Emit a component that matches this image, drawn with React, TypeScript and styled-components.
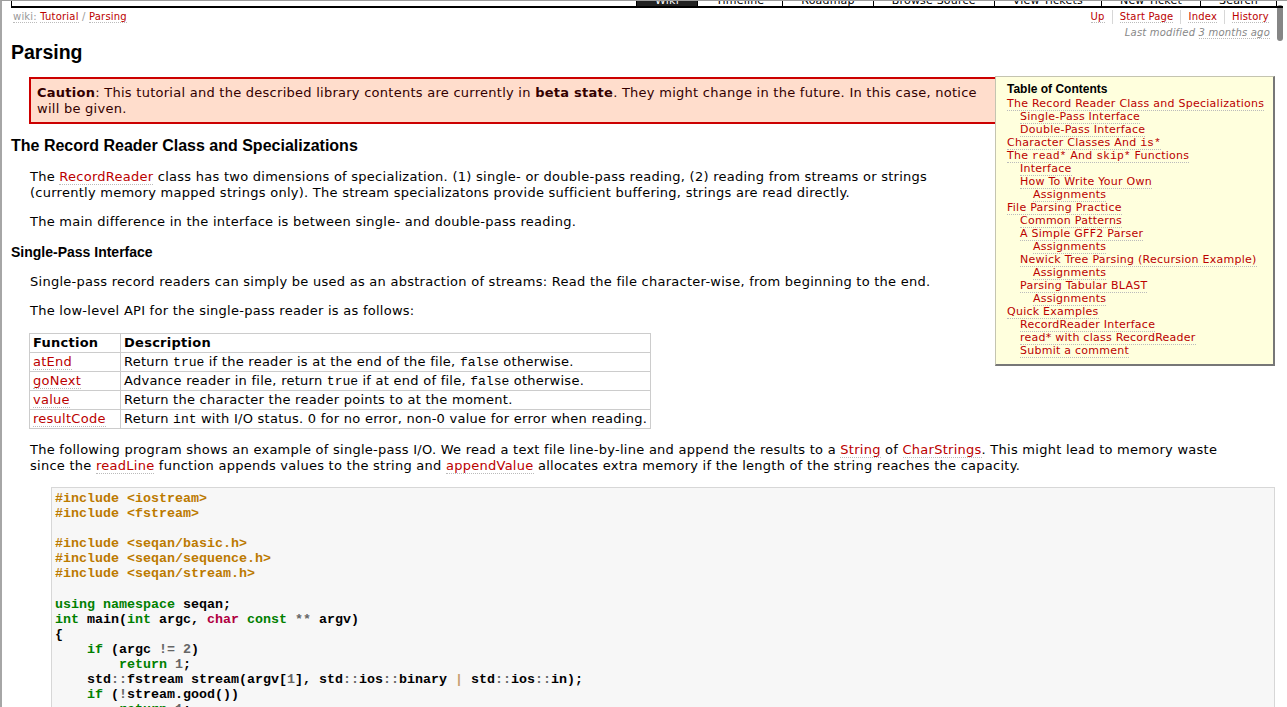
import React from "react";
import styled, { createGlobalStyle } from "styled-components";

const GlobalStyle = createGlobalStyle`
  html, body {
    margin: 0;
    padding: 0;
    background: #fff;
    overflow: hidden;
  }
  body {
    font-family: "DejaVu Sans", Verdana, sans-serif;
    font-size: 13px;
    letter-spacing: 0.26px;
    color: #000;
  }
`;

const Frame = styled.div`
  position: relative;
  height: 707px;
  box-sizing: border-box;
  border-top: 1px solid #9c9c9c;
  border-left: 2px solid #a6a6a6;
  overflow: hidden;
`;

const MainNav = styled.ul`
  display: flex;
  justify-content: flex-end;
  height: 5px;
  margin: 0 4px 0 9px;
  padding: 0 6px 0 0;
  list-style: none;
  border-left: 1px solid #000;
  border-bottom: 2px solid #000;
  overflow: hidden;
`;

const NavTab = styled.li<{ $active?: boolean }>`
  height: 5px;
  padding: 0 18px;
  border-left: 1px solid #000;
  background: ${(p) => (p.$active ? "#222" : "#fff")};
  color: ${(p) => (p.$active ? "#fff" : "#000")};
  font-size: 11px;
  letter-spacing: 0.2px;
  line-height: 13px;
  overflow: hidden;
  &:last-child {
    border-right: 1px solid #000;
  }
  span {
    display: block;
    margin-top: -7px;
    white-space: nowrap;
  }
`;

const ScrollThumb = styled.div`
  position: absolute;
  top: 4px;
  right: 4px;
  width: 6px;
  height: 36px;
  border-radius: 3px;
  background: rgba(0, 0, 0, 0.48);
`;

const Page = styled.div`
  padding: 0 12px 0 9px;
`;

const HeaderRow = styled.div`
  display: flex;
  justify-content: space-between;
  margin-top: 2px;
  font-size: 10px;
  letter-spacing: 0.2px;
  line-height: 14px;
`;

const Crumbs = styled.div`
  padding-left: 2px;
  color: #999;
`;

const Link = styled.a<{ $muted?: boolean }>`
  color: ${(p) => (p.$muted ? "#999" : "#b00")};
  text-decoration: none;
  border-bottom: 1px dotted #bbb;
  cursor: pointer;
`;

const CtxNav = styled.ul`
  display: flex;
  margin: 0;
  padding: 0 6px 0 0;
  list-style: none;
`;

const CtxItem = styled.li`
  padding: 0 7px;
  border-left: 1px solid #d7d7d7;
  &:first-child {
    border-left: none;
    padding-left: 0;
  }
  &:last-child {
    padding-right: 0;
  }
`;

const Modified = styled.div`
  margin-top: 2px;
  padding-right: 5px;
  text-align: right;
  font-size: 10px;
  letter-spacing: 0.2px;
  line-height: 14px;
  font-style: italic;
  color: #888;
  span {
    border-bottom: 1px dotted #bbb;
  }
`;

const Title = styled.h1`
  margin: 0;
  font-family: "Liberation Sans", Arial, sans-serif;
  font-size: 19.5px;
  line-height: 24px;
  font-weight: bold;
  letter-spacing: 0;
`;

const Wiki = styled.div`
  display: flow-root;
  padding-top: 12px;
`;

const Toc = styled.div`
  float: right;
  width: 280px;
  box-sizing: border-box;
  margin-left: 10px;
  padding: 6px 8px 7px 11px;
  background: #ffd;
  border: 1px solid #c4c4b0;
  border-right: 2px solid #777;
  border-bottom: 2px solid #777;
  font-size: 11px;
  line-height: 13px;
  letter-spacing: 0.25px;
`;

const TocTitle = styled.div`
  margin-bottom: 1px;
  font-family: "Liberation Sans", Arial, sans-serif;
  font-size: 12px;
  font-weight: bold;
  letter-spacing: 0;
`;

const TocItem = styled.div<{ $level: number }>`
  padding-left: ${(p) => p.$level * 13}px;
  white-space: nowrap;
`;

const Caution = styled.div`
  margin: 1px 0 0 18px;
  padding: 6px 6px 5px;
  background: #fdc;
  border: 2px solid #c00;
  color: #300;
  line-height: 16px;
`;

const H2 = styled.h2`
  margin: 12px 0 0;
  font-family: "Liberation Sans", Arial, sans-serif;
  font-size: 16px;
  line-height: 20px;
  letter-spacing: 0;
`;

const H3 = styled.h3`
  margin: 13px 0 0;
  font-family: "Liberation Sans", Arial, sans-serif;
  font-size: 14px;
  line-height: 18px;
  letter-spacing: 0;
`;

const P = styled.p`
  margin: 13px 20px 0 19px;
  line-height: 16px;
`;

const Tt = styled.code<{ $small?: boolean }>`
  font-family: "Liberation Mono", "Courier New", monospace;
  font-size: ${(p) => (p.$small ? "11.5px" : "13px")};
  line-height: 1;
  letter-spacing: 0;
`;

const Table = styled.table`
  margin: 14px 0 0 18px;
  border-collapse: collapse;
  border: 1px solid #ccc;
  line-height: 16px;
`;

const Th = styled.th<{ $w?: number }>`
  width: ${(p) => (p.$w ? `${p.$w}px` : "auto")};
  height: 16px;
  padding: 1px 3px;
  border: 1px solid #ccc;
  text-align: left;
  font-weight: bold;
`;

const Td = styled.td`
  height: 16px;
  padding: 1px 3px;
  border: 1px solid #ccc;
  white-space: nowrap;
`;

const Code = styled.pre`
  margin: 13px 0 0 40px;
  padding: 3px;
  background: #f7f7f7;
  border: 1px solid #d7d7d7;
  font-family: "Liberation Mono", "Courier New", monospace;
  font-size: 13.33px;
  font-weight: bold;
  line-height: 15.1px;
  letter-spacing: 0;
  color: #000;
`;

const Tok = styled.span<{ $k: string }>`
  color: ${(p) =>
    ({
      pp: "#bc7a00",
      kw: "#008000",
      ty: "#b00040",
      op: "#666",
      num: "#666",
      pipe: "#c8a070",
    } as Record<string, string>)[p.$k] || "#000"};
`;

const tabs = [
  "Wiki",
  "Timeline",
  "Roadmap",
  "Browse Source",
  "View Tickets",
  "New Ticket",
  "Search",
];

const toc: { level: number; label: React.ReactNode }[] = [
  { level: 0, label: "The Record Reader Class and Specializations" },
  { level: 1, label: "Single-Pass Interface" },
  { level: 1, label: "Double-Pass Interface" },
  {
    level: 0,
    label: (
      <>
        Character Classes And <Tt $small>is*</Tt>
      </>
    ),
  },
  {
    level: 0,
    label: (
      <>
        The <Tt $small>read*</Tt> And <Tt $small>skip*</Tt> Functions
      </>
    ),
  },
  { level: 1, label: "Interface" },
  { level: 1, label: "How To Write Your Own" },
  { level: 2, label: "Assignments" },
  { level: 0, label: "File Parsing Practice" },
  { level: 1, label: "Common Patterns" },
  { level: 1, label: "A Simple GFF2 Parser" },
  { level: 2, label: "Assignments" },
  { level: 1, label: "Newick Tree Parsing (Recursion Example)" },
  { level: 2, label: "Assignments" },
  { level: 1, label: "Parsing Tabular BLAST" },
  { level: 2, label: "Assignments" },
  { level: 0, label: "Quick Examples" },
  { level: 1, label: "RecordReader Interface" },
  { level: 1, label: "read* with class RecordReader" },
  { level: 1, label: "Submit a comment" },
];

type Line = [string, string][];

const code: Line[] = [
  [["pp", "#include <iostream>"]],
  [["pp", "#include <fstream>"]],
  [],
  [["pp", "#include <seqan/basic.h>"]],
  [["pp", "#include <seqan/sequence.h>"]],
  [["pp", "#include <seqan/stream.h>"]],
  [],
  [["kw", "using"], ["", " "], ["kw", "namespace"], ["", " seqan;"]],
  [
    ["kw", "int"],
    ["", " main("],
    ["kw", "int"],
    ["", " argc, "],
    ["ty", "char"],
    ["", " "],
    ["kw", "const"],
    ["", " "],
    ["op", "**"],
    ["", " argv)"],
  ],
  [["", "{"]],
  [["", "    "], ["kw", "if"], ["", " (argc "], ["op", "!="], ["", " "], ["num", "2"], ["", ")"]],
  [["", "        "], ["kw", "return"], ["", " "], ["num", "1"], ["", ";"]],
  [
    ["", "    std"],
    ["op", "::"],
    ["", "fstream stream(argv["],
    ["num", "1"],
    ["", "], std"],
    ["op", "::"],
    ["", "ios"],
    ["op", "::"],
    ["", "binary "],
    ["pipe", "|"],
    ["", " std"],
    ["op", "::"],
    ["", "ios"],
    ["op", "::"],
    ["", "in);"],
  ],
  [["", "    "], ["kw", "if"], ["", " ("], ["op", "!"], ["", "stream.good())"]],
  [["", "        "], ["kw", "return"], ["", " "], ["num", "1"], ["", ";"]],
  [],
  [["", "    RecordReader<std"], ["op", "::"], ["", "fstream, SinglePass<> > reader(stream);"]],
];

const rows: { fn: string; desc: React.ReactNode }[] = [
  {
    fn: "atEnd",
    desc: (
      <>
        Return <Tt>true</Tt> if the reader is at the end of the file, <Tt>false</Tt> otherwise.
      </>
    ),
  },
  {
    fn: "goNext",
    desc: (
      <>
        Advance reader in file, return <Tt>true</Tt> if at end of file, <Tt>false</Tt> otherwise.
      </>
    ),
  },
  { fn: "value", desc: "Return the character the reader points to at the moment." },
  {
    fn: "resultCode",
    desc: (
      <>
        Return <Tt>int</Tt> with I/O status. 0 for no error, non-0 value for error when reading.
      </>
    ),
  },
];

export default function App() {
  return (
    <Frame>
      <GlobalStyle />
      <MainNav>
        {tabs.map((t) => (
          <NavTab key={t} $active={t === "Wiki"}>
            <span>{t}</span>
          </NavTab>
        ))}
      </MainNav>
      <ScrollThumb />
      <Page>
        <HeaderRow>
          <Crumbs>
            <Link $muted>wiki:</Link> <Link>Tutorial</Link> / <Link>Parsing</Link>
          </Crumbs>
          <CtxNav>
            <CtxItem>
              <Link>Up</Link>
            </CtxItem>
            <CtxItem>
              <Link>Start Page</Link>
            </CtxItem>
            <CtxItem>
              <Link>Index</Link>
            </CtxItem>
            <CtxItem>
              <Link>History</Link>
            </CtxItem>
          </CtxNav>
        </HeaderRow>
        <Modified>
          Last modified <span>3 months ago</span>
        </Modified>
        <Title>Parsing</Title>
        <Wiki>
          <Toc>
            <TocTitle>Table of Contents</TocTitle>
            {toc.map((item, i) => (
              <TocItem key={i} $level={item.level}>
                <Link>{item.label}</Link>
              </TocItem>
            ))}
          </Toc>
          <Caution>
            <strong>Caution</strong>: This tutorial and the described library contents are
            currently in <strong>beta state</strong>. They might change in the future. In this
            case, notice will be given.
          </Caution>
          <H2>The Record Reader Class and Specializations</H2>
          <P>
            The <Link>RecordReader</Link> class has two dimensions of specialization. (1) single-
            or double-pass reading, (2) reading from streams or strings (currently memory mapped
            strings only). The stream specializatons provide sufficient buffering, strings are read
            directly.
          </P>
          <P>The main difference in the interface is between single- and double-pass reading.</P>
          <H3>Single-Pass Interface</H3>
          <P>
            Single-pass record readers can simply be used as an abstraction of streams: Read the
            file character-wise, from beginning to the end.
          </P>
          <P>The low-level API for the single-pass reader is as follows:</P>
          <Table>
            <tbody>
              <tr>
                <Th $w={84}>Function</Th>
                <Th>Description</Th>
              </tr>
              {rows.map((r) => (
                <tr key={r.fn}>
                  <Td>
                    <Link>{r.fn}</Link>
                  </Td>
                  <Td>{r.desc}</Td>
                </tr>
              ))}
            </tbody>
          </Table>
          <P>
            The following program shows an example of single-pass I/O. We read a text file
            line-by-line and append the results to a <Link>String</Link> of{" "}
            <Link>CharStrings</Link>. This might lead to memory waste since the{" "}
            <Link>readLine</Link> function appends values to the string and{" "}
            <Link>appendValue</Link> allocates extra memory if the length of the string reaches the
            capacity.
          </P>
          <Code>
            {code.map((line, i) => (
              <React.Fragment key={i}>
                {line.map(([k, text], j) => (
                  <Tok key={j} $k={k}>
                    {text}
                  </Tok>
                ))}
                {"\n"}
              </React.Fragment>
            ))}
          </Code>
        </Wiki>
      </Page>
    </Frame>
  );
}
